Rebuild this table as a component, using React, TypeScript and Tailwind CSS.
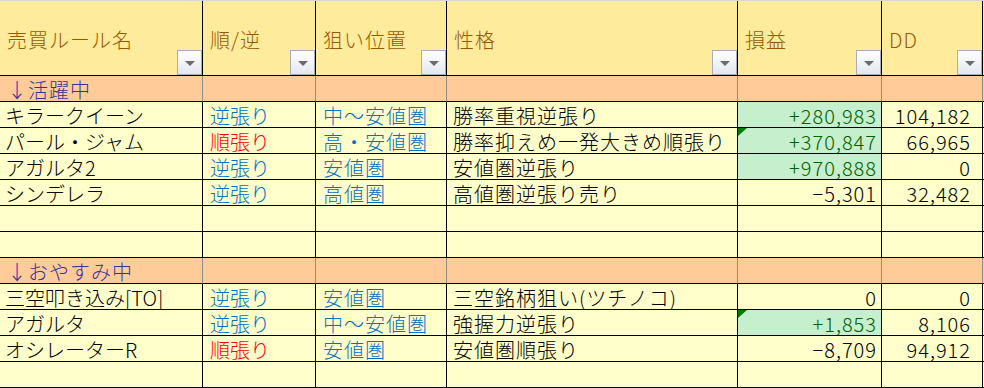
import React from 'react';

type Tone = 'blue' | 'red' | 'black';

type Row = {
  name: string;
  dir: string;
  dirTone: Tone;
  pos: string;
  nature: string;
  pnl: string;
  good?: boolean;
  flag?: boolean;
  dd: string;
};

const COLS = 'grid grid-cols-[203px_113px_131px_291px_144px_101px_1px]';

const ACTIVE: Row[] = [
  { name: 'キラークイーン', dir: '逆張り', dirTone: 'blue', pos: '中～安値圏', nature: '勝率重視逆張り', pnl: '+280,983', good: true, dd: '104,182' },
  { name: 'パール・ジャム', dir: '順張り', dirTone: 'red', pos: '高・安値圏', nature: '勝率抑えめ一発大きめ順張り', pnl: '+370,847', good: true, flag: true, dd: '66,965' },
  { name: 'アガルタ2', dir: '逆張り', dirTone: 'blue', pos: '安値圏', nature: '安値圏逆張り', pnl: '+970,888', good: true, dd: '0' },
  { name: 'シンデレラ', dir: '逆張り', dirTone: 'blue', pos: '高値圏', nature: '高値圏逆張り売り', pnl: '−5,301', dd: '32,482' },
];

const RESTING: Row[] = [
  { name: '三空叩き込み[TO]', dir: '逆張り', dirTone: 'blue', pos: '安値圏', nature: '三空銘柄狙い(ツチノコ)', pnl: '0', dd: '0' },
  { name: 'アガルタ', dir: '逆張り', dirTone: 'blue', pos: '中～安値圏', nature: '強握力逆張り', pnl: '+1,853', good: true, flag: true, dd: '8,106' },
  { name: 'オシレーターR', dir: '順張り', dirTone: 'red', pos: '安値圏', nature: '安値圏順張り', pnl: '−8,709', dd: '94,912' },
];

const toneClass: Record<Tone, string> = {
  blue: 'text-[#0070c0]',
  red: 'text-[#ff0000]',
  black: 'text-black',
};

function FilterButton() {
  return (
    <div className="absolute right-0 bottom-0 w-[25px] h-[25px] border border-[#a7aeb9] bg-linear-to-b from-white to-[#e3e7ee] flex items-center justify-center">
      <div className="mt-[2px] w-0 h-0 border-t-[5px] border-t-[#6b6b6b] border-x-[5px] border-x-transparent" />
    </div>
  );
}

function HeaderCell({ label, last }: { label: string; last?: boolean }) {
  return (
    <div className={`relative flex items-center pt-[3px] pl-[7px] border-b border-black ${last ? '' : 'border-r'} text-[#9c5700]`}>
      <span className="tracking-[1px]">{label}</span>
      {!last && <FilterButton />}
    </div>
  );
}

function GroupRow({ label }: { label: string }) {
  return (
    <div className={`${COLS} h-[26px] bg-[#ffcc99]`}>
      <div className="flex items-center pl-[7px] pt-[1px] border-b border-r border-b-black border-r-[#8c8c8c] text-[#333399] tracking-[1px] whitespace-nowrap">
        {label}
      </div>
      <div className="border-b border-r border-b-black border-r-[#8c8c8c]" />
      <div className="border-b border-r border-b-black border-r-[#8c8c8c]" />
      <div className="border-b border-r border-b-black border-r-[#8c8c8c]" />
      <div className="border-b border-r border-b-black border-r-[#8c8c8c]" />
      <div className="border-b border-r border-b-black border-r-[#8c8c8c]" />
      <div className="border-b border-black" />
    </div>
  );
}

function DataRow({ row }: { row?: Row }) {
  const cell = 'flex items-center pt-[1px] border-b border-r border-black whitespace-nowrap';
  return (
    <div className={`${COLS} h-[26px] bg-[#ffffcc]`}>
      <div className={`${cell} pl-[5px] text-black`}>{row?.name}</div>
      <div className={`${cell} pl-[7px] ${row ? toneClass[row.dirTone] : ''}`}>{row?.dir}</div>
      <div className={`${cell} pl-[7px] tracking-[1px] text-[#0070c0]`}>{row?.pos}</div>
      <div className={`${cell} pl-[6px] tracking-[1px] text-black`}>{row?.nature}</div>
      <div
        className={`${cell} relative justify-end pr-[4px] tracking-[1px] ${
          row?.good ? 'bg-[#c6efce] text-[#006100]' : 'text-black'
        }`}
      >
        {row?.flag && (
          <div className="absolute top-0 left-0 w-0 h-0 border-t-[8px] border-t-[#007a00] border-r-[9px] border-r-transparent" />
        )}
        {row?.pnl}
      </div>
      <div className={`${cell} justify-end pr-[11px] tracking-[1px] text-black`}>{row?.dd}</div>
      <div className="border-b border-black" />
    </div>
  );
}

export default function App() {
  return (
    <div className="w-[984px] h-[388px] overflow-hidden bg-[#ffffcc] [font-family:'Noto_Sans_CJK_JP','Noto_Sans',sans-serif] text-[20px] leading-[21px] font-light">
      <div className="h-[1px] bg-[#d6d6d6]" />
      <div className={`${COLS} h-[75px] bg-[#ffeb9c]`}>
        <HeaderCell label="売買ルール名" />
        <HeaderCell label="順/逆" />
        <HeaderCell label="狙い位置" />
        <HeaderCell label="性格" />
        <HeaderCell label="損益" />
        <HeaderCell label="DD" />
        <div className="border-b border-black" />
      </div>
      <GroupRow label="↓活躍中" />
      {ACTIVE.map((r) => (
        <DataRow key={r.name} row={r} />
      ))}
      <DataRow />
      <DataRow />
      <GroupRow label="↓おやすみ中" />
      {RESTING.map((r) => (
        <DataRow key={r.name} row={r} />
      ))}
      <DataRow />
    </div>
  );
}
